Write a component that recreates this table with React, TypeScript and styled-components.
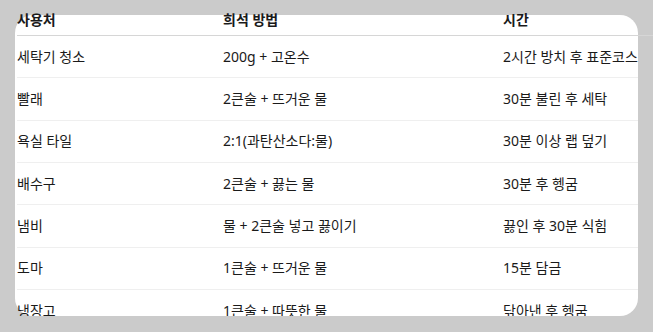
import React, { FC } from 'react'
import styled, { createGlobalStyle } from 'styled-components'

const GlobalStyle = createGlobalStyle`
    html, body {
        margin: 0;
        padding: 0;
        background: #cbcbcb;
    }
    body {
        font-family: "Noto Sans", "Noto Sans CJK KR", sans-serif;
        color: #1a1a1a;
    }
`

const Viewport = styled.div`
    height: 316px;
    overflow: hidden;
    padding: 15px 0 0 15px;
    box-sizing: border-box;
`

const Card = styled.section`
    display: flow-root;
    width: 623px;
    height: 301px;
    background: #ffffff;
    border-radius: 18px;
`

const Table = styled.div`
    display: flex;
    flex-direction: column;
    margin-top: -11px;
    padding-left: 2px;
`

const Row = styled.div<{ head?: boolean }>`
    display: grid;
    grid-template-columns: 206px 280px 1fr;
    align-items: center;
    box-sizing: content-box;
    width: ${props => props.head ? '660px' : '621px'};
    height: ${props => props.head ? '31px' : '41.33px'};
    border-bottom: 1px solid ${props => props.head ? '#d6d6d6' : '#efefef'};
    font-size: 14px;
    font-weight: ${props => props.head ? 700 : 400};
    white-space: nowrap;
`

const Cell = styled.div`
    line-height: 18px;
`

const rows = [
    ['세탁기 청소', '200g + 고온수', '2시간 방치 후 표준코스'],
    ['빨래', '2큰술 + 뜨거운 물', '30분 불린 후 세탁'],
    ['욕실 타일', '2:1(과탄산소다:물)', '30분 이상 랩 덮기'],
    ['배수구', '2큰술 + 끓는 물', '30분 후 헹굼'],
    ['냄비', '물 + 2큰술 넣고 끓이기', '끓인 후 30분 식힘'],
    ['도마', '1큰술 + 뜨거운 물', '15분 담금'],
    ['냉장고', '1큰술 + 따뜻한 물', '닦아낸 후 헹굼'],
]

const App: FC = () => {
    return (
        <>
            <GlobalStyle />
            <Viewport>
                <Card>
                    <Table>
                        <Row head>
                            <Cell>사용처</Cell>
                            <Cell>희석 방법</Cell>
                            <Cell>시간</Cell>
                        </Row>
                        {rows.map(r => (
                            <Row key={r[0]}>
                                <Cell>{r[0]}</Cell>
                                <Cell>{r[1]}</Cell>
                                <Cell>{r[2]}</Cell>
                            </Row>
                        ))}
                    </Table>
                </Card>
            </Viewport>
        </>
    )
}

export default App
